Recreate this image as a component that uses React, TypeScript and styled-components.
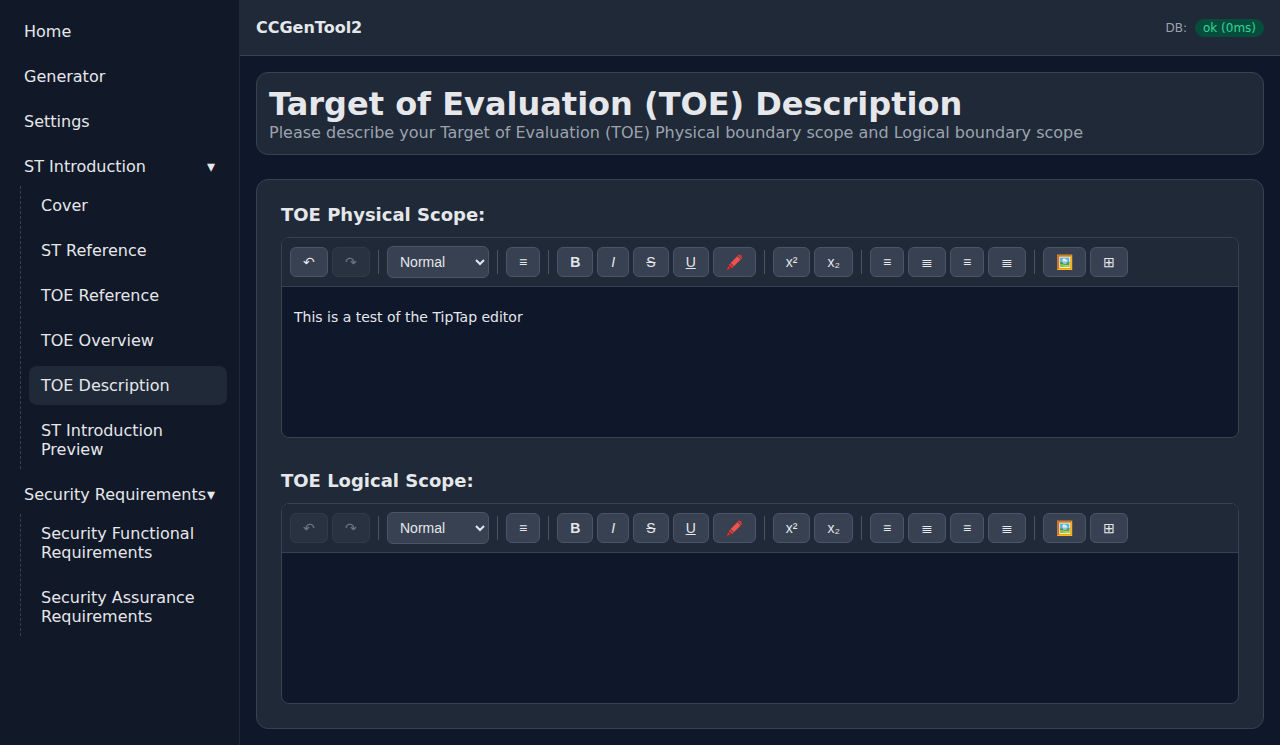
import React, { useState } from 'react';
import styled, { createGlobalStyle } from 'styled-components';

const sans = `'DejaVu Sans', sans-serif`;
const controlFont = `'Liberation Sans', Arial, sans-serif`;

const color = {
  page: '#0f172a',
  sidebar: '#111827',
  panel: '#1f2937',
  line: '#374151',
  control: '#374151',
  controlLine: '#4b5563',
  text: '#e5e7eb',
  muted: '#9ca3af',
  okBg: '#064e3b',
  okText: '#34d399',
};

const GlobalStyle = createGlobalStyle`
  *, *::before, *::after { box-sizing: border-box; }
  body {
    margin: 0;
    background: ${color.page};
    color: ${color.text};
    font-family: ${sans};
    font-size: 16px;
    line-height: 19px;
  }
`;

const Shell = styled.div`
  display: grid;
  grid-template-columns: 240px minmax(0, 1fr);
  min-height: 100vh;
`;

const Sidebar = styled.aside`
  background: ${color.sidebar};
  border-right: 1px solid ${color.panel};
  padding: 12px;
`;

const Nav = styled.nav`
  display: flex;
  flex-direction: column;
  gap: 6px;
`;

const NavLink = styled.a<{ $active?: boolean }>`
  display: block;
  padding: 10px 12px;
  border-radius: 8px;
  color: ${color.text};
  text-decoration: none;
  background: ${({ $active }) => ($active ? color.panel : 'transparent')};

  &:hover {
    background: ${color.panel};
  }
`;

const NavToggle = styled.button`
  display: flex;
  justify-content: space-between;
  width: 100%;
  padding: 10px 12px;
  border: 0;
  border-radius: 8px;
  background: transparent;
  color: ${color.text};
  font: inherit;
  text-align: left;
  white-space: nowrap;
  cursor: pointer;
`;

const SubNav = styled.div`
  display: flex;
  flex-direction: column;
  gap: 6px;
  margin-left: 8px;
  padding-left: 8px;
  border-left: 1px dashed ${color.line};
`;

const Main = styled.div`
  display: flex;
  flex-direction: column;
`;

const Header = styled.header`
  display: flex;
  align-items: center;
  justify-content: space-between;
  height: 56px;
  padding: 0 16px;
  background: ${color.panel};
  border-bottom: 1px solid ${color.line};
`;

const Brand = styled.div`
  font-weight: 700;
`;

const Status = styled.div`
  display: flex;
  align-items: center;
  gap: 8px;
  font-size: 12px;
  line-height: 14px;
  color: ${color.muted};
`;

const Pill = styled.span`
  padding: 2px 8px;
  border-radius: 999px;
  background: ${color.okBg};
  color: ${color.okText};
`;

const Content = styled.main`
  display: flex;
  flex-direction: column;
  gap: 24px;
  padding: 16px;
`;

const Card = styled.section<{ $pad: number }>`
  display: flex;
  flex-direction: column;
  padding: ${({ $pad }) => $pad}px;
  border: 1px solid ${color.line};
  border-radius: 12px;
  background: ${color.panel};
`;

const Title = styled.h1`
  margin: 0;
  font-size: 32px;
  line-height: 38px;
`;

const Subtitle = styled.p`
  margin: 0;
  color: ${color.muted};
`;

const Scopes = styled.div`
  display: flex;
  flex-direction: column;
  gap: 32px;
`;

const Field = styled.div`
  display: flex;
  flex-direction: column;
  gap: 12px;
`;

const FieldLabel = styled.label`
  font-size: 18px;
  line-height: 21px;
  font-weight: 700;
`;

const EditorBox = styled.div`
  overflow: hidden;
  border: 1px solid ${color.line};
  border-radius: 8px;
  background: ${color.page};
`;

const Toolbar = styled.div`
  display: flex;
  flex-wrap: wrap;
  align-items: center;
  gap: 4px;
  padding: 8px;
  background: ${color.panel};
  border-bottom: 1px solid ${color.line};
`;

const Tool = styled.button`
  min-width: 32px;
  height: 30px;
  padding: 6px 12px;
  border: 1px solid ${color.controlLine};
  border-radius: 6px;
  background: ${color.control};
  color: ${color.text};
  font-family: ${controlFont};
  font-size: 14px;
  line-height: 16px;
  cursor: pointer;

  &:disabled {
    opacity: 0.4;
    cursor: not-allowed;
  }
`;

const StyleSelect = styled.select`
  width: 102px;
  height: 32px;
  padding: 6px 8px;
  border: 1px solid ${color.controlLine};
  border-radius: 6px;
  background: ${color.control};
  color: ${color.text};
  font-family: ${controlFont};
  font-size: 14px;
`;

const Divider = styled.span`
  width: 1px;
  height: 24px;
  margin: 0 4px;
  background: ${color.controlLine};
`;

const TextArea = styled.textarea`
  display: block;
  width: 100%;
  min-height: 150px;
  padding: 20px 12px;
  border: 0;
  outline: 0;
  resize: none;
  background: transparent;
  color: ${color.text};
  font-family: ${sans};
  font-size: 14px;
  line-height: 20px;
`;

type ToolItem = { label: string; icon: React.ReactNode };

const toolGroups: ToolItem[][] = [
  [{ label: 'Bullet list', icon: '≡' }],
  [
    { label: 'Bold', icon: <strong>B</strong> },
    { label: 'Italic', icon: <em>I</em> },
    { label: 'Strikethrough', icon: <s>S</s> },
    { label: 'Underline', icon: <u>U</u> },
    { label: 'Highlight', icon: '🖍️' },
  ],
  [
    { label: 'Superscript', icon: 'x²' },
    { label: 'Subscript', icon: 'x₂' },
  ],
  [
    { label: 'Align left', icon: '≡' },
    { label: 'Align center', icon: '≣' },
    { label: 'Align right', icon: '≡' },
    { label: 'Justify', icon: '≣' },
  ],
  [
    { label: 'Insert image', icon: '🖼️' },
    { label: 'Insert table', icon: '⊞' },
  ],
];

function Editor({ id, label, initial, canUndo }: { id: string; label: string; initial: string; canUndo: boolean }) {
  const [value, setValue] = useState(initial);
  return (
    <Field>
      <FieldLabel htmlFor={id}>{label}</FieldLabel>
      <EditorBox>
        <Toolbar role="toolbar" aria-label="Formatting">
          <Tool type="button" aria-label="Undo" disabled={!canUndo}>↶</Tool>
          <Tool type="button" aria-label="Redo" disabled>↷</Tool>
          <Divider />
          <StyleSelect aria-label="Text style" defaultValue="Normal">
            <option>Normal</option>
            <option>Heading 1</option>
            <option>Heading 2</option>
            <option>Heading 3</option>
          </StyleSelect>
          {toolGroups.map((group, i) => (
            <React.Fragment key={i}>
              <Divider />
              {group.map((tool) => (
                <Tool key={tool.label} type="button" aria-label={tool.label}>{tool.icon}</Tool>
              ))}
            </React.Fragment>
          ))}
        </Toolbar>
        <TextArea id={id} value={value} spellCheck={false} onChange={(e) => setValue(e.target.value)} />
      </EditorBox>
    </Field>
  );
}

function NavGroup({ title, items, active }: { title: string; items: string[]; active?: string }) {
  const [open, setOpen] = useState(true);
  return (
    <div>
      <NavToggle type="button" aria-expanded={open} onClick={() => setOpen(!open)}>
        <span>{title}</span>
        <span aria-hidden="true">{open ? '▾' : '▸'}</span>
      </NavToggle>
      {open && (
        <SubNav>
          {items.map((item) => (
            <NavLink key={item} href="#" $active={item === active}>{item}</NavLink>
          ))}
        </SubNav>
      )}
    </div>
  );
}

export default function App() {
  return (
    <>
      <GlobalStyle />
      <Shell>
        <Sidebar>
          <Nav>
            <NavLink href="#">Home</NavLink>
            <NavLink href="#">Generator</NavLink>
            <NavLink href="#">Settings</NavLink>
            <NavGroup
              title="ST Introduction"
              items={['Cover', 'ST Reference', 'TOE Reference', 'TOE Overview', 'TOE Description', 'ST Introduction Preview']}
              active="TOE Description"
            />
            <NavGroup
              title="Security Requirements"
              items={['Security Functional Requirements', 'Security Assurance Requirements']}
            />
          </Nav>
        </Sidebar>
        <Main>
          <Header>
            <Brand>CCGenTool2</Brand>
            <Status>
              <span>DB:</span>
              <Pill>ok (0ms)</Pill>
            </Status>
          </Header>
          <Content>
            <Card $pad={12}>
              <Title>Target of Evaluation (TOE) Description</Title>
              <Subtitle>Please describe your Target of Evaluation (TOE) Physical boundary scope and Logical boundary scope</Subtitle>
            </Card>
            <Card $pad={24}>
              <Scopes>
                <Editor id="physical-scope" label="TOE Physical Scope:" initial="This is a test of the TipTap editor" canUndo />
                <Editor id="logical-scope" label="TOE Logical Scope:" initial="" canUndo={false} />
              </Scopes>
            </Card>
          </Content>
        </Main>
      </Shell>
    </>
  );
}
